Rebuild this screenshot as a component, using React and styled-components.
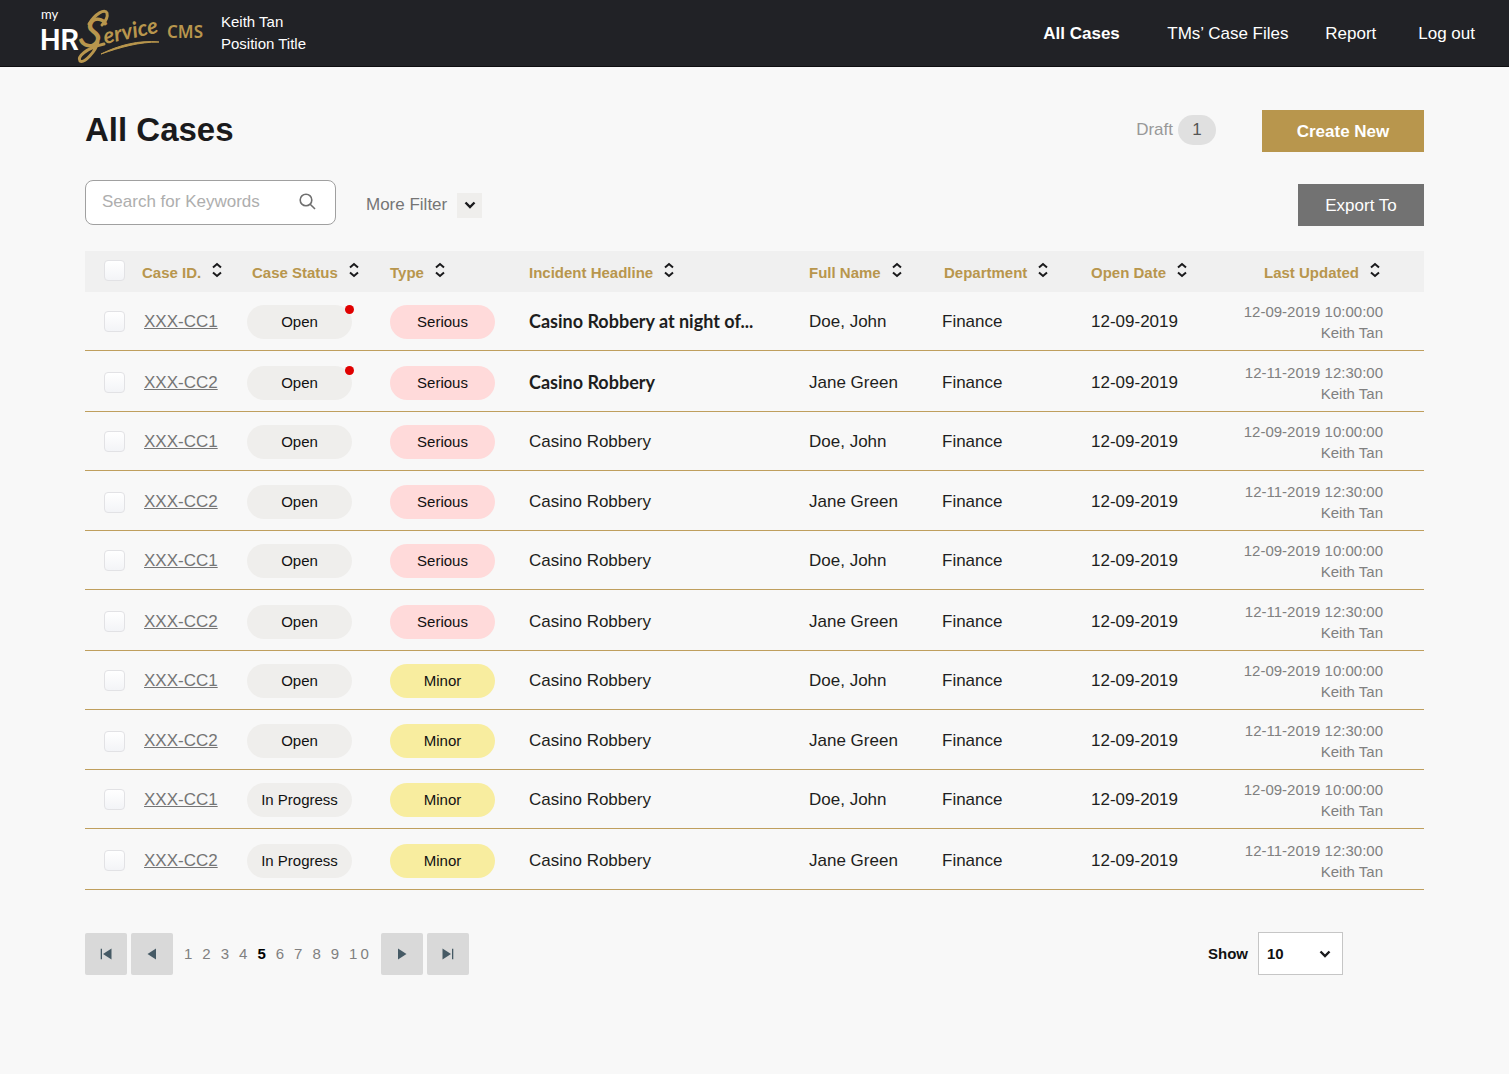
import React from "react";
import styled, { createGlobalStyle } from "styled-components";

const GlobalStyle = createGlobalStyle`
  *, *::before, *::after { box-sizing: border-box; }
  body {
    margin: 0;
    background: #f8f8f8;
    color: #1e1e20;
    font-family: "Liberation Sans", Arial, sans-serif;
    font-size: 17px;
  }
  button, input, select { font: inherit; color: inherit; }
`;

const gold = "#b8964d";

const TopBar = styled.header`
  display: flex;
  align-items: center;
  min-height: 67px;
  padding: 0 34px 0 40px;
  background: #212226;
  border-bottom: 1px solid #0e0e10;
  color: #fff;
`;

const LogoArt = styled.svg`
  display: block;
  flex: none;
  overflow: visible;
`;

const UserInfo = styled.div`
  margin-left: 15px;
  font-size: 15px;
  line-height: 22px;
`;

const Nav = styled.nav`
  display: grid;
  grid-template-columns: 124px 158px 93px auto;
  margin-left: auto;
  padding-top: 2px;
  line-height: 20px;
`;

const NavLink = styled.a`
  color: #fff;
  text-decoration: none;
  white-space: nowrap;
  font-weight: ${(p) => (p.$active ? 700 : 400)};
`;

const Main = styled.main`
  padding: 43px 85px 40px;
`;

const TitleRow = styled.div`
  display: flex;
  align-items: flex-start;
`;

const Title = styled.h1`
  flex: 1;
  margin: 0;
  font-size: 33px;
  line-height: 39px;
  color: #1a1a1c;
`;

const Draft = styled.a`
  display: flex;
  align-items: center;
  gap: 5px;
  min-height: 39px;
  margin-right: 46px;
  color: #999;
  text-decoration: none;
`;

const DraftCount = styled.span`
  display: grid;
  place-items: center;
  width: 38px;
  height: 30px;
  border-radius: 15px;
  background: #e0e0e0;
  color: #555;
`;

const ActionButton = styled.button`
  height: 42px;
  width: ${(p) => (p.$primary ? 162 : 126)}px;
  padding: 2px 0 0;
  border: 0;
  background: ${(p) => (p.$primary ? gold : "#727272")};
  color: #fff;
  font-weight: ${(p) => (p.$primary ? 700 : 400)};
`;

const FilterRow = styled.div`
  display: flex;
  align-items: center;
  justify-content: space-between;
  margin-top: 28px;
  min-height: 50px;
`;

const FilterTools = styled.div`
  display: flex;
  align-items: center;
  align-self: stretch;
  gap: 30px;
`;

const SearchBox = styled.label`
  display: flex;
  align-items: center;
  align-self: flex-start;
  width: 251px;
  height: 45px;
  padding: 0 19px 2px 16px;
  border: 1px solid #a0a0a0;
  border-radius: 8px;
  background: #fff;
`;

const SearchInput = styled.input`
  flex: 1;
  min-width: 0;
  padding: 0;
  border: 0;
  outline: 0;
  background: transparent;
  &::placeholder { color: #aeaeae; opacity: 1; }
`;

const MoreFilter = styled.button`
  display: flex;
  align-items: center;
  gap: 10px;
  padding: 0;
  border: 0;
  background: none;
  color: #757575;
`;

const ChevronBox = styled.span`
  display: grid;
  place-items: center;
  width: 25px;
  height: 25px;
  background: #efeeec;
`;

const Table = styled.table`
  width: 100%;
  margin-top: 21px;
  table-layout: fixed;
  border-collapse: separate;
  border-spacing: 0;
`;

const Col = styled.col`
  width: ${(p) => (p.$width ? `${p.$width}px` : "auto")};
`;

const HeadCell = styled.th`
  height: 41px;
  padding: 0 ${(p) => (p.$end ? 43 : 0)}px 3px ${(p) => p.$inset || 0}px;
  background: #f0f0f0;
  text-align: left;
`;

const SortButton = styled.button`
  display: flex;
  align-items: center;
  gap: 10px;
  margin-left: ${(p) => (p.$end ? "auto" : 0)};
  padding: 0;
  border: 0;
  background: none;
  color: ${gold};
  font-size: 15px;
  font-weight: 700;
  line-height: 20px;
  white-space: nowrap;
  & > span { padding-top: 5px; }
  & > svg { display: block; flex: none; }
`;

const Cell = styled.td`
  padding: 1px 0 0 ${(p) => p.$inset || 0}px;
  border-bottom: 1px solid #bf9f5e;
  vertical-align: middle;
  white-space: nowrap;
  line-height: 20px;
`;

const Row = styled.tr`
  height: 59px;
  &:nth-child(even) { height: 61px; }
  &:nth-child(4n) { height: 60px; }
  &:nth-child(even) > ${Cell} { padding-top: 3px; }
`;

const CheckBox = styled.input`
  appearance: none;
  display: block;
  width: 21px;
  height: 21px;
  margin: 0;
  border: 1px solid #e2e2e5;
  border-radius: 4px;
  background: linear-gradient(#fff, #f3f4f7);
  &:checked { background: ${gold}; }
`;

const CaseLink = styled.a`
  color: #757575;
  text-decoration: underline;
`;

const pillColors = { status: "#efeeec", Serious: "#ffdada", Minor: "#f8ed9f" };

const Pill = styled.span`
  position: relative;
  display: grid;
  place-items: center;
  width: 105px;
  height: 34px;
  border-radius: 17px;
  background: ${(p) => pillColors[p.$kind]};
  color: #111;
  font-size: 15px;
`;

const Dot = styled.i`
  position: absolute;
  top: 0;
  right: -2px;
  width: 9px;
  height: 9px;
  border-radius: 50%;
  background: #e00000;
`;

const Headline = styled.span`
  font-family: ${(p) => (p.$unread ? 'Lato, "Liberation Sans", sans-serif' : "inherit")};
  font-size: ${(p) => (p.$unread ? 18 : 17)}px;
  font-weight: ${(p) => (p.$unread ? 700 : 400)};
`;

const Updated = styled.div`
  padding-right: 41px;
  color: #808080;
  font-size: 15px;
  line-height: 21px;
  text-align: right;
`;

const Footer = styled.footer`
  display: flex;
  align-items: center;
  justify-content: space-between;
  margin-top: 42px;
  padding-right: 81px;
  font-size: 15px;
`;

const Pager = styled.nav`
  display: flex;
  align-items: center;
  gap: 4px;
`;

const StepButton = styled.button`
  display: grid;
  place-items: center;
  width: 42px;
  height: 42px;
  padding: 0;
  border: 0;
  border-radius: 2px;
  background: #d9d9d9;
`;

const Pages = styled.div`
  display: flex;
  gap: 7px;
  padding: 0 5px 0 7px;
  letter-spacing: 3px;
`;

const PageButton = styled.button`
  padding: 0;
  border: 0;
  background: none;
  letter-spacing: inherit;
  color: ${(p) => (p.$current ? "#000" : "#808080")};
  font-weight: ${(p) => (p.$current ? 700 : 400)};
`;

const ShowLabel = styled.label`
  display: flex;
  align-items: center;
  gap: 10px;
  color: #111;
  font-weight: 700;
`;

const SelectWrap = styled.span`
  display: grid;
  grid-template-columns: 1fr 24px;
  align-items: center;
  width: 85px;
  height: 43px;
  & > svg { grid-area: 1 / 2; pointer-events: none; }
`;

const Select = styled.select`
  grid-area: 1 / 1 / 2 / 3;
  appearance: none;
  width: 100%;
  height: 100%;
  padding: 0 8px;
  border: 1px solid #c6c6c6;
  border-radius: 0;
  background: #fff;
`;

function Logo() {
  return (
    <LogoArt width="166" height="66" viewBox="40 0 166 66" role="img" aria-label="my HR Service CMS">
      <text x="41" y="19" fill="#fff" fontFamily="Lato, sans-serif" fontSize="13">my</text>
      <text x="40" y="50" fill="#fff" fontFamily="Roboto, sans-serif" fontWeight="600" fontSize="29">HR</text>
      <g fill={gold} fontFamily="Lato, sans-serif" fontStyle="italic">
        <text transform="translate(93 33) rotate(20)" x="0" y="15" textAnchor="middle" fontSize="44" fontWeight="400">S</text>
        <text transform="translate(105 44) rotate(-12)" x="0" y="0" fontSize="22" fontWeight="700">ervice</text>
      </g>
      <g fill="none" stroke={gold} strokeLinecap="round" strokeWidth="3">
        <path d="M89 24C95 14 105 8 107 13C108 17 105 22 102 25" />
        <path d="M98 42C96 51 84 64 80 61C77 57 86 48 104 44" />
      </g>
      <path d="M101 54C119 45 139 40 159 42C139 42 121 47 101 54Z" fill={gold} stroke={gold} strokeWidth="1" />
      <text x="167" y="38" fill={gold} fontFamily="'Noto Sans', sans-serif" fontWeight="600" fontSize="17">CMS</text>
    </LogoArt>
  );
}

const SortIcon = () => (
  <svg width="12" height="16" viewBox="0 0 12 16" fill="none" stroke="#1a1a1c" strokeWidth="2" aria-hidden="true">
    <path d="M2 5.5L6 2L10 5.5M2 10.5L6 14L10 10.5" />
  </svg>
);

const Chevron = () => (
  <svg width="12" height="8" viewBox="0 0 12 8" fill="none" stroke="#1a1a1c" strokeWidth="2.4" aria-hidden="true">
    <path d="M1.5 1.5L6 6L10.5 1.5" />
  </svg>
);

const SearchIcon = () => (
  <svg width="17" height="17" viewBox="0 0 17 17" fill="none" stroke="#6f6f6f" strokeWidth="1.6" aria-hidden="true">
    <circle cx="7" cy="7" r="5.8" />
    <path d="M11.2 11.2L16 16" />
  </svg>
);

const StepIcon = ({ back, edge }) => (
  <svg width="14" height="12" viewBox="0 0 14 12" fill="#465a65" aria-hidden="true">
    <g transform={back ? "translate(14 0) scale(-1 1)" : undefined}>
      <path d={edge ? "M1.5 .5L10 6L1.5 11.5Z" : "M3 .5L11.5 6L3 11.5Z"} />
      {edge && <path d="M11 .8H12.3V11.2H11Z" />}
    </g>
  </svg>
);

const columns = [
  { label: "Case ID.", width: 105 },
  { label: "Case Status", width: 143, inset: 5 },
  { label: "Type", width: 139 },
  { label: "Incident Headline" },
  { label: "Full Name", width: 133 },
  { label: "Department", width: 149, inset: 2 },
  { label: "Open Date", width: 130 },
  { label: "Last Updated", width: 203, end: true },
];

const cases = Array.from({ length: 10 }, (_, i) => {
  const first = i % 2 === 0;
  return {
    id: first ? "XXX-CC1" : "XXX-CC2",
    status: i < 8 ? "Open" : "In Progress",
    type: i < 6 ? "Serious" : "Minor",
    unread: i < 2,
    headline: i === 0 ? "Casino Robbery at night of..." : "Casino Robbery",
    name: first ? "Doe, John" : "Jane Green",
    updated: first ? "12-09-2019 10:00:00" : "12-11-2019 12:30:00",
  };
});

export default function App() {
  return (
    <>
      <GlobalStyle />
      <TopBar>
        <Logo />
        <UserInfo>
          <div>Keith Tan</div>
          <div>Position Title</div>
        </UserInfo>
        <Nav>
          <NavLink href="#cases" $active>All Cases</NavLink>
          <NavLink href="#files">TMs’ Case Files</NavLink>
          <NavLink href="#report">Report</NavLink>
          <NavLink href="#logout">Log out</NavLink>
        </Nav>
      </TopBar>
      <Main>
        <TitleRow>
          <Title>All Cases</Title>
          <Draft href="#drafts">Draft <DraftCount>1</DraftCount></Draft>
          <ActionButton type="button" $primary>Create New</ActionButton>
        </TitleRow>
        <FilterRow>
          <FilterTools>
            <SearchBox>
              <SearchInput type="text" placeholder="Search for Keywords" aria-label="Search for Keywords" />
              <SearchIcon />
            </SearchBox>
            <MoreFilter type="button">
              More Filter
              <ChevronBox><Chevron /></ChevronBox>
            </MoreFilter>
          </FilterTools>
          <ActionButton type="button">Export To</ActionButton>
        </FilterRow>
        <Table>
          <colgroup>
            <Col $width={57} />
            {columns.map((c) => <Col key={c.label} $width={c.width} />)}
          </colgroup>
          <thead>
            <tr>
              <HeadCell $inset={19}><CheckBox type="checkbox" aria-label="Select all cases" /></HeadCell>
              {columns.map((c) => (
                <HeadCell key={c.label} $inset={c.inset} $end={c.end} scope="col">
                  <SortButton type="button" $end={c.end}><span>{c.label}</span><SortIcon /></SortButton>
                </HeadCell>
              ))}
            </tr>
          </thead>
          <tbody>
            {cases.map((c, i) => (
              <Row key={i}>
                <Cell $inset={19}><CheckBox type="checkbox" aria-label={`Select case ${c.id}`} /></Cell>
                <Cell $inset={2}><CaseLink href="#case">{c.id}</CaseLink></Cell>
                <Cell><Pill $kind="status">{c.status}{c.unread && <Dot />}</Pill></Cell>
                <Cell><Pill $kind={c.type}>{c.type}</Pill></Cell>
                <Cell><Headline $unread={c.unread}>{c.headline}</Headline></Cell>
                <Cell>{c.name}</Cell>
                <Cell>Finance</Cell>
                <Cell>12-09-2019</Cell>
                <Cell>
                  <Updated>
                    <div>{c.updated}</div>
                    <div>Keith Tan</div>
                  </Updated>
                </Cell>
              </Row>
            ))}
          </tbody>
        </Table>
        <Footer>
          <Pager aria-label="Pages">
            <StepButton type="button" aria-label="First page"><StepIcon back edge /></StepButton>
            <StepButton type="button" aria-label="Previous page"><StepIcon back /></StepButton>
            <Pages>
              {[1, 2, 3, 4, 5, 6, 7, 8, 9, 10].map((n) => (
                <PageButton key={n} type="button" $current={n === 5}>{n}</PageButton>
              ))}
            </Pages>
            <StepButton type="button" aria-label="Next page"><StepIcon /></StepButton>
            <StepButton type="button" aria-label="Last page"><StepIcon edge /></StepButton>
          </Pager>
          <ShowLabel>
            Show
            <SelectWrap>
              <Select defaultValue="10">
                <option>10</option>
                <option>20</option>
                <option>50</option>
              </Select>
              <Chevron />
            </SelectWrap>
          </ShowLabel>
        </Footer>
      </Main>
    </>
  );
}
